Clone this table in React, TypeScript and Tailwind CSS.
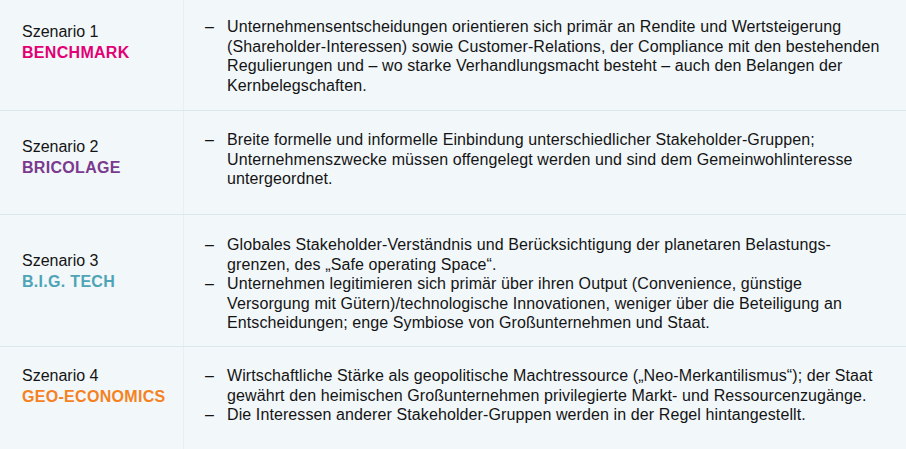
import React from "react";

type Row = {
  n: string;
  name: string;
  color: string;
  h: string;
  lpt: string;
  rpt: string;
  items: string[][];
};

const rows: Row[] = [
  {
    n: "1",
    name: "BENCHMARK",
    color: "text-[#e20074]",
    h: "h-[111px]",
    lpt: "pt-[21px]",
    rpt: "pt-[17px]",
    items: [
      [
        "Unternehmensentscheidungen orientieren sich primär an Rendite und Wertsteigerung",
        "(Shareholder-Interessen) sowie Customer-Relations, der Compliance mit den bestehenden",
        "Regulierungen und – wo starke Verhandlungsmacht besteht – auch den Belangen der",
        "Kernbelegschaften.",
      ],
    ],
  },
  {
    n: "2",
    name: "BRICOLAGE",
    color: "text-[#7a3a8e]",
    h: "h-[104px]",
    lpt: "pt-[25px]",
    rpt: "pt-[19px]",
    items: [
      [
        "Breite formelle und informelle Einbindung unterschiedlicher Stakeholder-Gruppen;",
        "Unternehmenszwecke müssen offengelegt werden und sind dem Gemeinwohlinteresse",
        "untergeordnet.",
      ],
    ],
  },
  {
    n: "3",
    name: "B.I.G. TECH",
    color: "text-[#4ea4b6]",
    h: "h-[132px]",
    lpt: "pt-[35px]",
    rpt: "pt-[20px]",
    items: [
      [
        "Globales Stakeholder-Verständnis und Berücksichtigung der planetaren Belastungs-",
        "grenzen, des „Safe operating Space“.",
      ],
      [
        "Unternehmen legitimieren sich primär über ihren Output (Convenience, günstige",
        "Versorgung mit Gütern)/technologische Innovationen, weniger über die Beteiligung an",
        "Entscheidungen; enge Symbiose von Großunternehmen und Staat.",
      ],
    ],
  },
  {
    n: "4",
    name: "GEO-ECONOMICS",
    color: "text-[#f5821f]",
    h: "h-[102px]",
    lpt: "pt-[18px]",
    rpt: "pt-[19px]",
    items: [
      [
        "Wirtschaftliche Stärke als geopolitische Machtressource („Neo-Merkantilismus“); der Staat",
        "gewährt den heimischen Großunternehmen privilegierte Markt- und Ressourcenzugänge.",
      ],
      ["Die Interessen anderer Stakeholder-Gruppen werden in der Regel hintangestellt."],
    ],
  },
];

export default function App() {
  return (
    <div
      className="w-[906px] h-[449px] overflow-hidden bg-[#f2f7fa] text-[#141414]"
      style={{ fontFamily: '"Liberation Sans", Arial, sans-serif' }}
    >
      {rows.map((r, i) => (
        <div
          key={r.n}
          className={`flex ${r.h} ${i < rows.length - 1 ? "border-b border-[#dae7ed]" : ""}`}
        >
          <div className={`w-[184px] shrink-0 border-r border-[#e6eff3] pl-[22px] ${r.lpt}`}>
            <div className="text-[16px] leading-[21px]">Szenario {r.n}</div>
            <div className={`text-[16px] leading-[21px] font-bold tracking-[0.3px] ${r.color}`}>
              {r.name}
            </div>
          </div>
          <div className={`flex-1 pl-[21px] ${r.rpt}`}>
            {r.items.map((lines, j) => (
              <div key={j} className="flex text-[16px] leading-[19.5px] tracking-[0.1px]">
                <span className="w-[22px] shrink-0">–</span>
                <div>
                  {lines.map((l, k) => (
                    <div key={k} className="whitespace-nowrap">
                      {l}
                    </div>
                  ))}
                </div>
              </div>
            ))}
          </div>
        </div>
      ))}
    </div>
  );
}
